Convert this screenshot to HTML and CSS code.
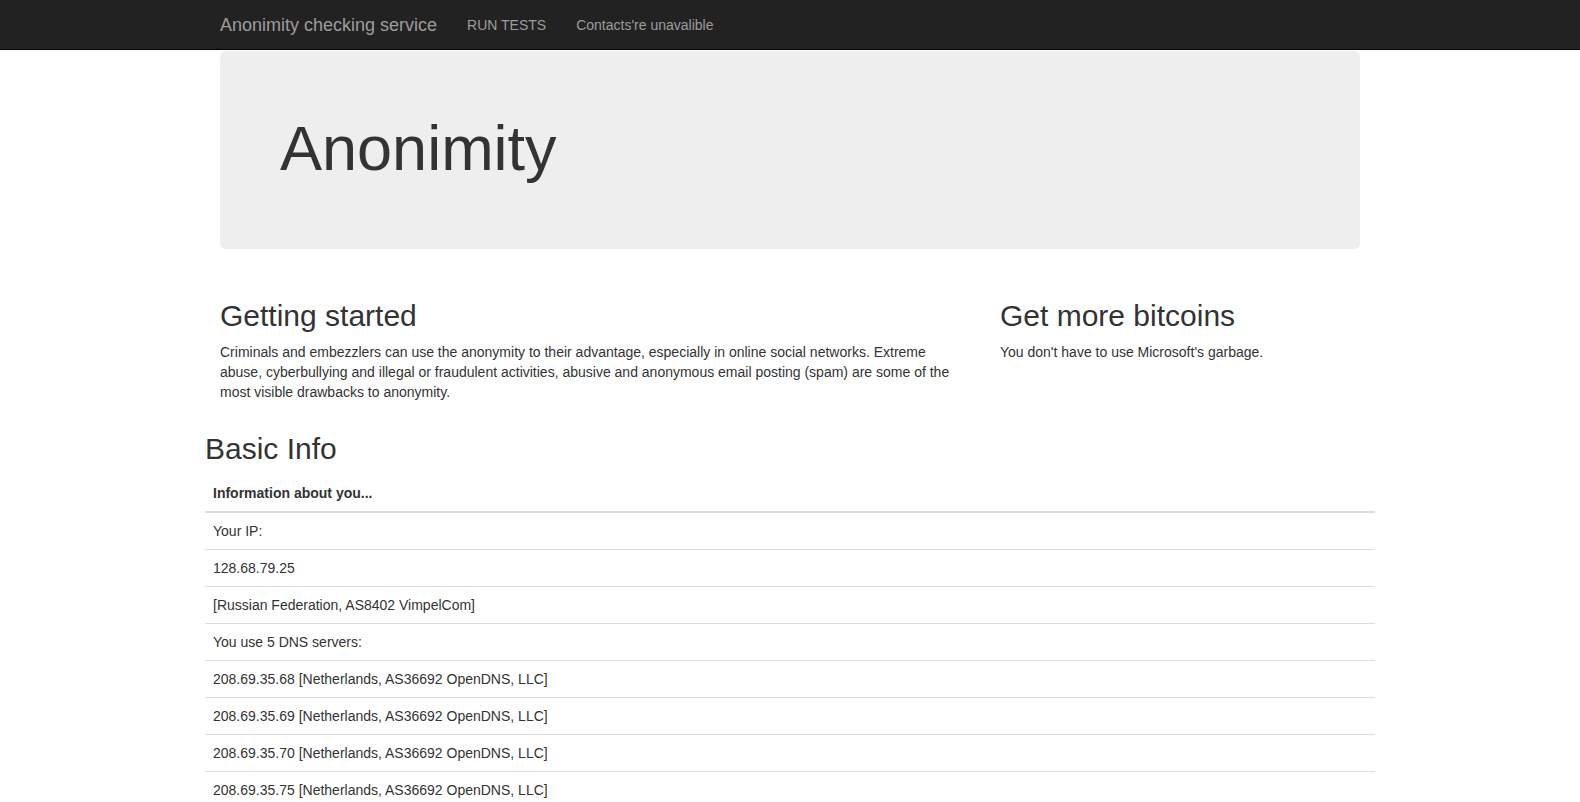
FILE: index.html
```html
<!DOCTYPE html>
<html lang="en">
<head>
<meta charset="utf-8">
<title>Anonimity checking service</title>
<link rel="stylesheet" href="styles.css">
</head>
<body>
<nav class="navbar">
  <div class="container navbar-inner">
    <a class="navbar-brand" href="#">Anonimity checking service</a>
    <ul class="nav">
      <li><a href="#">RUN TESTS</a></li>
      <li><a href="#">Contacts're unavalible</a></li>
    </ul>
  </div>
</nav>

<main class="container">
  <div class="jumbotron">
    <h1>Anonimity</h1>
  </div>
  <div class="row">
    <div class="col col-main">
      <h2>Getting started</h2>
      <p>Criminals and embezzlers can use the anonymity to their advantage, especially in online social networks. Extreme abuse, cyberbullying and illegal or fraudulent activities, abusive and anonymous email posting (spam) are some of the most visible drawbacks to anonymity.</p>
    </div>
    <div class="col col-side">
      <h2>Get more bitcoins</h2>
      <p>You don't have to use Microsoft's garbage.</p>
    </div>
  </div>
</main>

<section class="info">
  <h2>Basic Info</h2>
  <table class="table">
    <thead>
      <tr><th>Information about you...</th></tr>
    </thead>
    <tbody>
      <tr><td>Your IP:</td></tr>
      <tr><td>128.68.79.25</td></tr>
      <tr><td>[Russian Federation, AS8402 VimpelCom]</td></tr>
      <tr><td>You use 5 DNS servers:</td></tr>
      <tr><td>208.69.35.68 [Netherlands, AS36692 OpenDNS, LLC]</td></tr>
      <tr><td>208.69.35.69 [Netherlands, AS36692 OpenDNS, LLC]</td></tr>
      <tr><td>208.69.35.70 [Netherlands, AS36692 OpenDNS, LLC]</td></tr>
      <tr><td>208.69.35.75 [Netherlands, AS36692 OpenDNS, LLC]</td></tr>
    </tbody>
  </table>
</section>
</body>
</html>
```

FILE: styles.css
```css
* { box-sizing: border-box; }

html, body {
  margin: 0;
  padding: 0;
}

body {
  font-family: "Liberation Sans", Arial, Helvetica, sans-serif;
  font-size: 14px;
  line-height: 20px;
  color: #333;
  background: #fff;
}

a { text-decoration: none; }

.container {
  width: 1170px;
  margin: 0 auto;
  padding: 0 15px;
}

/* Navbar */
.navbar {
  background: #222;
  border-bottom: 1px solid #080808;
  height: 50px;
}

.navbar-inner {
  display: flex;
  align-items: stretch;
  height: 49px;
}

.navbar-brand {
  display: block;
  margin-left: -15px;
  padding: 15px;
  font-size: 18px;
  line-height: 20px;
  height: 50px;
  color: #9d9d9d;
}

.nav {
  display: flex;
  list-style: none;
  margin: 0;
  padding: 0;
}

.nav a {
  display: block;
  padding: 15px;
  line-height: 20px;
  color: #9d9d9d;
}

/* Jumbotron */
.jumbotron {
  margin-top: 1px;
  margin-bottom: 30px;
  background: #eee;
  border-radius: 6px;
  padding: 63px 60px 66px;
}

.jumbotron h1 {
  margin: 0;
  font-size: 63px;
  line-height: 69px;
  font-weight: 500;
}

/* Columns */
.row {
  display: grid;
  grid-template-columns: 2fr 1fr;
  margin: 0 -15px;
}

.col {
  padding: 0 15px;
}

h2 {
  margin: 20px 0 10px;
  font-size: 30px;
  line-height: 33px;
  font-weight: 500;
}

p {
  margin: 0 0 10px;
}

/* Info table */
.info {
  width: 1170px;
  margin: 0 auto;
}

.table {
  width: 100%;
  border-collapse: collapse;
  border-spacing: 0;
}

.table th {
  text-align: left;
  font-weight: bold;
  padding: 8px;
  line-height: 20px;
  border-bottom: 2px solid #ddd;
}

.table td {
  padding: 8px;
  line-height: 20px;
  border-top: 1px solid #ddd;
}
```
